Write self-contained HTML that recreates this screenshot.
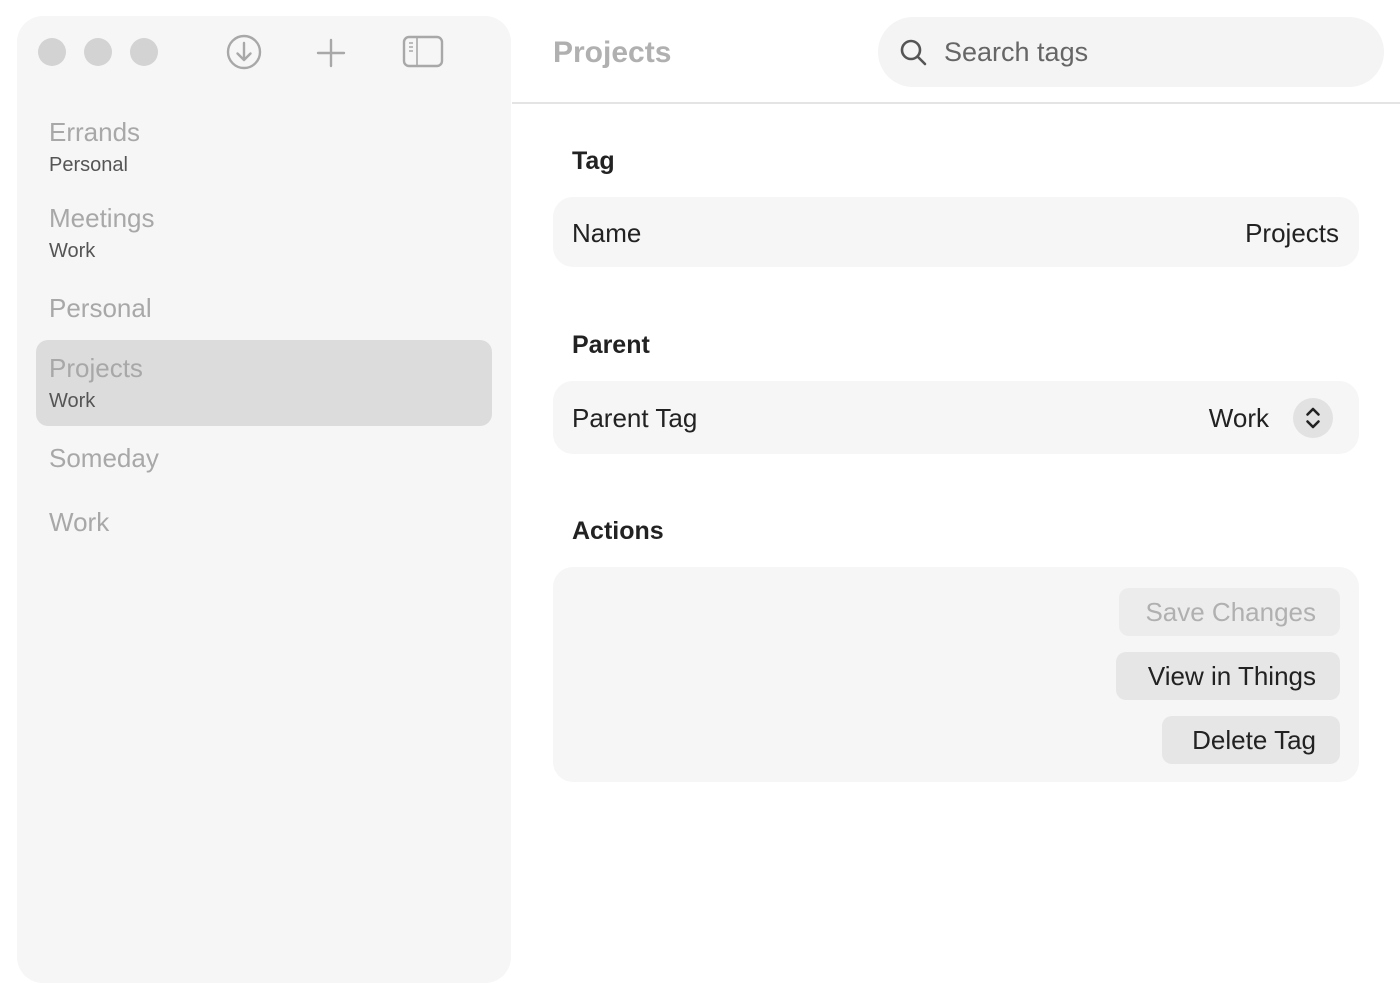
<!DOCTYPE html><html><head><style>
body{margin:0;width:1400px;height:1000px;background:#fff;font-family:"Liberation Sans",sans-serif;position:relative;overflow:hidden}
.a{position:absolute}
.side{left:17px;top:16px;width:494px;height:967px;background:#f6f6f6;border-radius:26px}
.dot{width:28px;height:28px;border-radius:50%;background:#d3d3d3;top:38px}
.t{font-size:26px;color:#a8a8a8}
.s{font-size:20px;color:#555}
.card{left:553px;width:806px;background:#f6f6f6;border-radius:20px}
.h{font-size:25px;font-weight:bold;color:#222;left:572px}
.r{font-size:26px;color:#222}
.btn{background:#e6e6e6;border-radius:10px;font-size:26px;color:#222;text-align:right;padding-right:24px;box-sizing:border-box;height:48px;line-height:48px}
</style></head><body>
<div class="a side"></div>
<div class="a dot" style="left:38px"></div><div class="a dot" style="left:84px"></div><div class="a dot" style="left:130px"></div>
<svg class="a" style="left:224px;top:32px" width="40" height="40" viewBox="0 0 40 40" fill="none" stroke="#a8a8a8" stroke-width="2.4" stroke-linecap="round" stroke-linejoin="round"><circle cx="20" cy="20" r="16"/><path d="M20 11v17M13.5 21.5L20 28l6.5-6.5"/></svg>
<svg class="a" style="left:314px;top:36px" width="34" height="34" viewBox="0 0 34 34" stroke="#a8a8a8" stroke-width="2.4" stroke-linecap="round"><path d="M17 4v26M4 17h26"/></svg>
<svg class="a" style="left:402px;top:35px" width="42" height="34" viewBox="0 0 42 34" fill="none" stroke="#a8a8a8" stroke-width="2.4"><rect x="2" y="2" width="38" height="29" rx="5"/><path d="M15 2v29M7 8h4M7 12h4M7 16h4" stroke-width="1.6"/></svg>
<div class="a" style="left:512px;top:102px;width:888px;height:2px;background:#e4e4e4"></div>
<div class="a t" style="left:49px;top:117px">Errands</div><div class="a s" style="left:49px;top:154px">Personal</div>
<div class="a t" style="left:49px;top:203px">Meetings</div><div class="a s" style="left:49px;top:240px">Work</div>
<div class="a t" style="left:49px;top:293px">Personal</div>
<div class="a" style="left:36px;top:340px;width:456px;height:86px;background:#dcdcdc;border-radius:12px"></div>
<div class="a t" style="left:49px;top:353px">Projects</div><div class="a s" style="left:49px;top:390px">Work</div>
<div class="a t" style="left:49px;top:443px">Someday</div>
<div class="a t" style="left:49px;top:507px">Work</div>
<div class="a" style="left:553px;top:36px;font-size:30px;font-weight:bold;color:#b0b0b0">Projects</div>
<div class="a" style="left:878px;top:17px;width:506px;height:70px;background:#f4f4f4;border-radius:35px"></div>
<svg class="a" style="left:899px;top:38px" width="30" height="30" viewBox="0 0 30 30" fill="none" stroke="#555" stroke-width="2.6" stroke-linecap="round"><circle cx="12" cy="12" r="9"/><path d="M19 19l7 7"/></svg>
<div class="a" style="left:944px;top:37px;font-size:27px;color:#666">Search tags</div>
<div class="a h" style="top:147px">Tag</div>
<div class="a card" style="top:197px;height:70px"></div>
<div class="a r" style="left:572px;top:218px">Name</div><div class="a r" style="right:61px;top:218px">Projects</div>
<div class="a h" style="top:331px">Parent</div>
<div class="a card" style="top:381px;height:73px"></div>
<div class="a r" style="left:572px;top:403px">Parent Tag</div><div class="a r" style="right:131px;top:403px">Work</div>
<div class="a" style="left:1293px;top:398px;width:40px;height:40px;border-radius:50%;background:#e2e2e2"></div>
<svg class="a" style="left:1293px;top:398px" width="40" height="40" viewBox="0 0 40 40" fill="none" stroke="#222" stroke-width="2.6" stroke-linecap="round" stroke-linejoin="round"><path d="M14.5 16.5L20 11l5.5 5.5M14.5 23.5L20 29l5.5-5.5"/></svg>
<div class="a h" style="top:517px">Actions</div>
<div class="a card" style="top:567px;height:215px"></div>
<div class="a btn" style="left:1119px;top:588px;width:221px;background:#ececec;color:#b0b0b0">Save Changes</div>
<div class="a btn" style="left:1116px;top:652px;width:224px">View in Things</div>
<div class="a btn" style="left:1162px;top:716px;width:178px">Delete Tag</div>
</body></html>
